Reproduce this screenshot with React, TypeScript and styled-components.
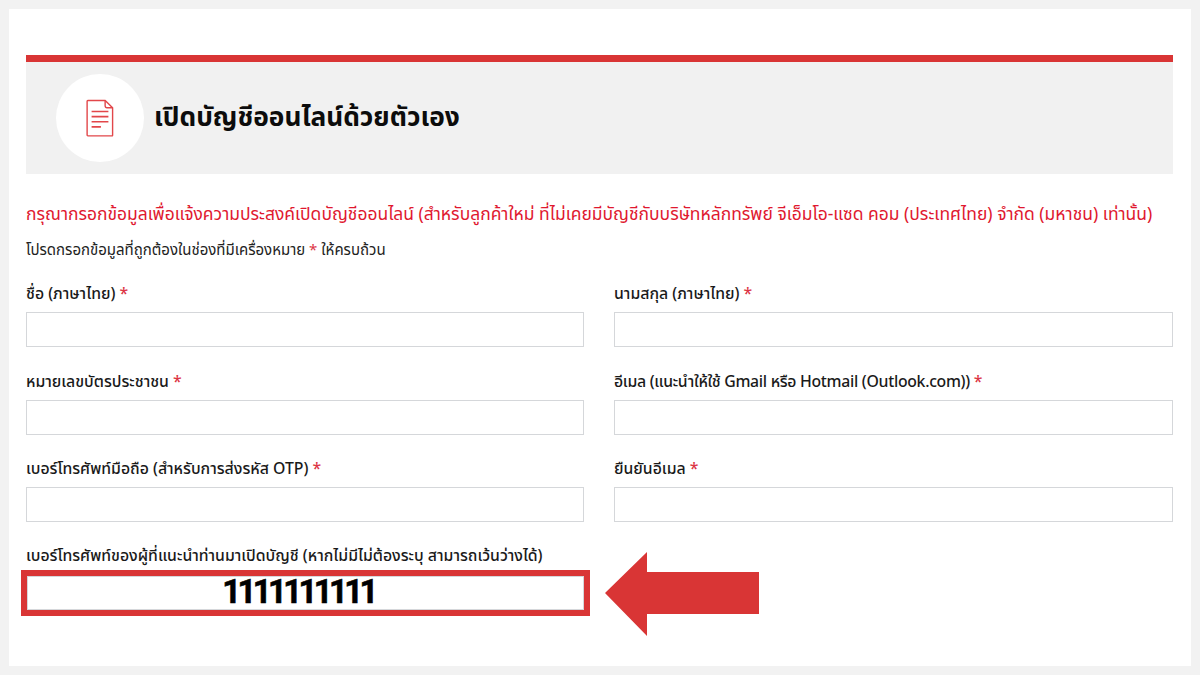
import React from "react";
import styled, { createGlobalStyle } from "styled-components";

const GlobalStyle = createGlobalStyle`
  html, body {
    margin: 0;
    padding: 0;
    width: 1200px;
    height: 675px;
    overflow: hidden;
    background: #f2f2f2;
    font-family: "Noto Sans Thai", "Noto Sans", "Liberation Sans", sans-serif;
  }
  * { box-sizing: border-box; }
`;

const Panel = styled.main`
  margin: 9px;
  width: 1182px;
  height: 657px;
  background: #fff;
  padding: 46px 18px 0 17px;
`;

const Banner = styled.header`
  display: flex;
  align-items: center;
  gap: 11px;
  height: 119px;
  padding: 0 0 0 30px;
  background: #f1f1f1;
  border-top: 7px solid #d93535;
`;

const IconCircle = styled.div`
  display: flex;
  align-items: center;
  justify-content: center;
  width: 88px;
  height: 88px;
  border-radius: 50%;
  background: #fff;
`;

const Title = styled.h1`
  margin: 0 0 0 -1px;
  font-size: 26.3px;
  font-weight: 700;
  color: #0c0c0c;
`;

const Notice = styled.p`
  margin: 29px 0 0;
  font-size: 17.48px;
  line-height: 24px;
  color: #e0182f;
  white-space: nowrap;
`;

const Hint = styled.p`
  margin: 14px 0 0;
  font-size: 15px;
  line-height: 20px;
  color: #222;
`;

const Star = styled.span`
  color: #dc3545;
`;

const FormGrid = styled.div`
  display: grid;
  grid-template-columns: 558px 559px;
  column-gap: 30px;
  row-gap: 22.5px;
  margin-top: 21px;
`;

const Field = styled.div`
  display: flex;
  flex-direction: column;
  gap: 6px;
`;

const LastField = styled(Field)`
  margin-top: -0.5px;
`;

const Label = styled.label<{ $tight?: boolean }>`
  font-size: 15.8px;
  font-weight: 500;
  line-height: 24px;
  letter-spacing: ${(p) => (p.$tight ? "-0.3px" : "0")};
  color: #1a1a1a;
  white-space: nowrap;
`;

const TextInput = styled.input`
  display: block;
  width: 100%;
  height: 35px;
  padding: 0 12px;
  background: #fff;
  border: 1px solid #d5d7da;
  border-radius: 0;
  outline: none;
`;

const HighlightInput = styled(TextInput)`
  width: 557px;
  height: 34px;
  margin: 2px 0 0 1px;
  padding: 0 14px 3px 0;
  text-align: center;
  font-family: Roboto, "Liberation Sans", sans-serif;
  font-size: 33px;
  font-weight: 700;
  letter-spacing: -3.7px;
  color: #000;
  -webkit-text-stroke: 0.6px #000;
  box-shadow: 0 0 0 6px #d93535;
`;

const ArrowCell = styled.div`
  display: flex;
  align-items: flex-start;
`;

const ArrowSvg = styled.svg`
  display: block;
  flex: none;
  margin: 7.5px 0 0 -9px;
`;

const DocIcon = () => (
  <svg width="28" height="38" viewBox="0 0 30 40" fill="none" stroke="#e2474a">
    <path d="M2 1.2h18.5L28.5 9v29.5a.6.6 0 0 1-.6.6H2a.8.8 0 0 1-.8-.8V2a.8.8 0 0 1 .8-.8z" strokeWidth="1.5" />
    <path d="M20.5 1.2V7a2 2 0 0 0 2 2h6" strokeWidth="1.5" />
    <path d="M6 13h18M6 18.5h18M6 24h18M6 29.5h10" strokeWidth="1.8" />
  </svg>
);

const fields: { label: string; tight?: boolean }[] = [
  { label: "ชื่อ (ภาษาไทย)" },
  { label: "นามสกุล (ภาษาไทย)" },
  { label: "หมายเลขบัตรประชาชน" },
  { label: "อีเมล (แนะนำให้ใช้ Gmail หรือ Hotmail (Outlook.com))", tight: true },
  { label: "เบอร์โทรศัพท์มือถือ (สำหรับการส่งรหัส OTP)" },
  { label: "ยืนยันอีเมล" },
];

const App: React.FC = () => {
  return (
    <>
      <GlobalStyle />
      <Panel>
        <Banner>
          <IconCircle>
            <DocIcon />
          </IconCircle>
          <Title>เปิดบัญชีออนไลน์ด้วยตัวเอง</Title>
        </Banner>
        <Notice>
          กรุณากรอกข้อมูลเพื่อแจ้งความประสงค์เปิดบัญชีออนไลน์ (สำหรับลูกค้าใหม่ ที่ไม่เคยมีบัญชีกับบริษัทหลักทรัพย์ จีเอ็มโอ-แซด คอม (ประเทศไทย) จำกัด (มหาชน) เท่านั้น)
        </Notice>
        <Hint>
          โปรดกรอกข้อมูลที่ถูกต้องในช่องที่มีเครื่องหมาย <Star>*</Star> ให้ครบถ้วน
        </Hint>
        <FormGrid>
          {fields.map((f) => (
            <Field key={f.label}>
              <Label $tight={f.tight}>
                {f.label} <Star>*</Star>
              </Label>
              <TextInput />
            </Field>
          ))}
          <LastField>
            <Label>เบอร์โทรศัพท์ของผู้ที่แนะนำท่านมาเปิดบัญชี (หากไม่มีไม่ต้องระบุ สามารถเว้นว่างได้)</Label>
            <HighlightInput defaultValue="1111111111" readOnly />
          </LastField>
          <ArrowCell>
            <ArrowSvg width="154" height="84" viewBox="0 0 154 84">
              <path d="M0 41 42 0v20h112v42H42v22z" fill="#d93535" />
            </ArrowSvg>
          </ArrowCell>
        </FormGrid>
      </Panel>
    </>
  );
};

export default App;
